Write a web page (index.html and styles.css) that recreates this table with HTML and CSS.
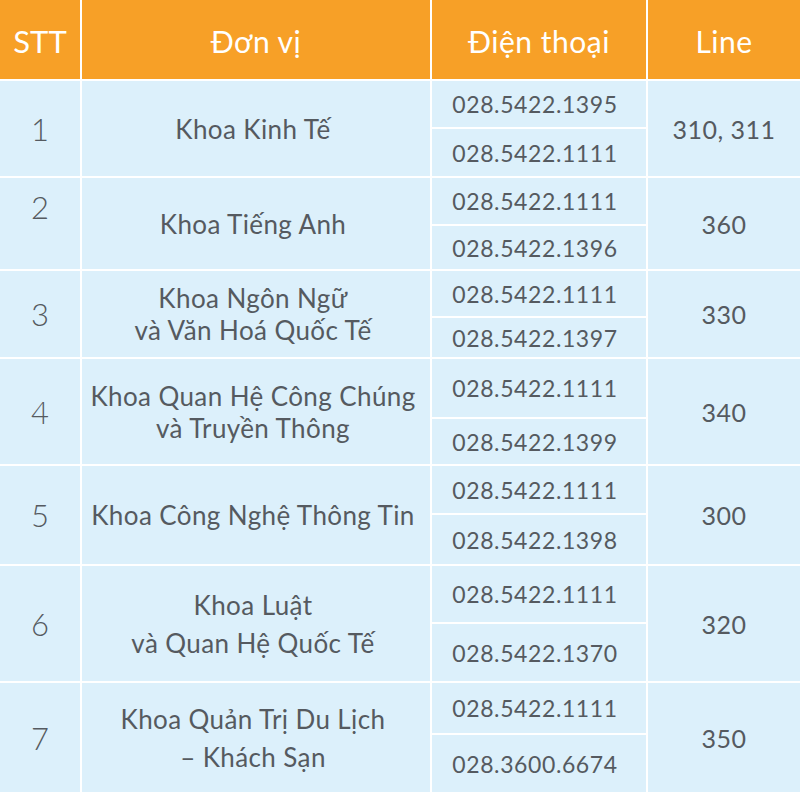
FILE: index.html
```html
<!DOCTYPE html>
<html lang="vi">
<head>
<meta charset="utf-8">
<title>Danh bạ</title>
<link rel="stylesheet" href="styles.css">
</head>
<body>
<div class="table">
  <div class="head stt-h">STT</div>
  <div class="head">Đơn vị</div>
  <div class="head">Điện thoại</div>
  <div class="head">Line</div>

  <div class="cell stt r1">1</div>
  <div class="cell name r1">Khoa Kinh Tế</div>
  <div class="cell phone">028.5422.1395</div>
  <div class="cell line r1">310, 311</div>
  <div class="cell phone">028.5422.1111</div>

  <div class="cell stt r2 top">2</div>
  <div class="cell name r2">Khoa Tiếng Anh</div>
  <div class="cell phone">028.5422.1111</div>
  <div class="cell line r2">360</div>
  <div class="cell phone">028.5422.1396</div>

  <div class="cell stt r3">3</div>
  <div class="cell name r3">Khoa Ngôn Ngữ<br>và Văn Hoá Quốc Tế</div>
  <div class="cell phone">028.5422.1111</div>
  <div class="cell line r3">330</div>
  <div class="cell phone">028.5422.1397</div>

  <div class="cell stt r4">4</div>
  <div class="cell name r4">Khoa Quan Hệ Công Chúng<br>và Truyền Thông</div>
  <div class="cell phone">028.5422.1111</div>
  <div class="cell line r4">340</div>
  <div class="cell phone">028.5422.1399</div>

  <div class="cell stt r5">5</div>
  <div class="cell name r5">Khoa Công Nghệ Thông Tin</div>
  <div class="cell phone">028.5422.1111</div>
  <div class="cell line r5">300</div>
  <div class="cell phone">028.5422.1398</div>

  <div class="cell stt r6">6</div>
  <div class="cell name r6 wide">Khoa Luật<br>và Quan Hệ Quốc Tế</div>
  <div class="cell phone">028.5422.1111</div>
  <div class="cell line r6">320</div>
  <div class="cell phone">028.5422.1370</div>

  <div class="cell stt r7">7</div>
  <div class="cell name r7 wide">Khoa Quản Trị Du Lịch<br>– Khách Sạn</div>
  <div class="cell phone">028.5422.1111</div>
  <div class="cell line r7">350</div>
  <div class="cell phone">028.3600.6674</div>
</div>
</body>
</html>
```

FILE: styles.css
```css
html, body {
  margin: 0;
  padding: 0;
  background: #ffffff;
}

.table {
  width: 800px;
  height: 792px;
  display: grid;
  grid-template-columns: 80px 348px 214px 1fr;
  grid-template-rows: 79px 46px 47px 46px 43px 45px 39px 58px 45px 47px 49px 56px 57px 50px 57px;
  gap: 2px;
  background: #ffffff;
  font-family: "Lato", "Open Sans", sans-serif;
  color: #555a60;
}

.head {
  background: #f7a027;
  color: #ffffff;
  font-size: 30px;
  letter-spacing: 0.5px;
  display: flex;
  align-items: center;
  justify-content: center;
  padding-top: 2px;
}

.stt-h {
  font-size: 31px;
  letter-spacing: 0;
}

.cell {
  background: #dcf0fb;
  display: flex;
  align-items: center;
  justify-content: center;
  text-align: center;
}

.stt {
  grid-column: 1;
  font-size: 31px;
  font-weight: 300;
}

.stt.top {
  align-items: flex-start;
  padding-top: 10px;
}

.name {
  grid-column: 2;
  font-size: 26px;
  line-height: 32px;
  letter-spacing: 0.4px;
  padding-right: 6px;
}

.name.wide {
  line-height: 38px;
}

.phone {
  grid-column: 3;
  font-size: 23px;
  letter-spacing: 0.6px;
  padding-right: 8px;
}

.line {
  grid-column: 4;
  font-size: 25px;
  letter-spacing: 0.5px;
}

.r1 { grid-row: 2 / span 2; }
.r2 { grid-row: 4 / span 2; }
.r3 { grid-row: 6 / span 2; }
.r4 { grid-row: 8 / span 2; }
.r5 { grid-row: 10 / span 2; }
.r6 { grid-row: 12 / span 2; }
.r7 { grid-row: 14 / span 2; }
```
